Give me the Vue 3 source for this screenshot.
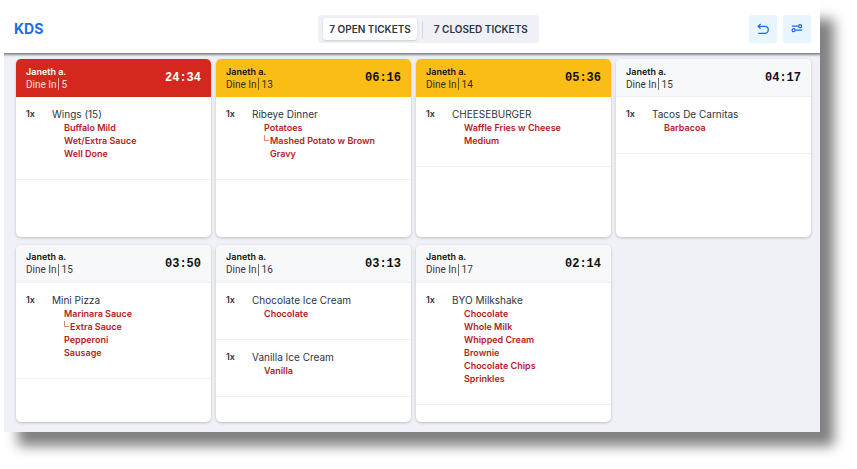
<script setup>
import { ref } from 'vue'

const tab = ref('open')
const tickets = [
  { name: 'Janeth a.', table: 5, time: '24:34', tone: 'late', items: [
    { name: 'Wings (15)', mods: [{ t: 'Buffalo Mild' }, { t: 'Wet/Extra Sauce' }, { t: 'Well Done' }] }] },
  { name: 'Janeth a.', table: 13, time: '06:16', tone: 'warn', items: [
    { name: 'Ribeye Dinner', mods: [{ t: 'Potatoes' }, { t: 'Mashed Potato w Brown Gravy', sub: true }] }] },
  { name: 'Janeth a.', table: 14, time: '05:36', tone: 'warn', items: [
    { name: 'CHEESEBURGER', mods: [{ t: 'Waffle Fries w Cheese' }, { t: 'Medium' }] }] },
  { name: 'Janeth a.', table: 15, time: '04:17', tone: 'calm', items: [
    { name: 'Tacos De Carnitas', mods: [{ t: 'Barbacoa' }] }] },
  { name: 'Janeth a.', table: 15, time: '03:50', tone: 'calm', items: [
    { name: 'Mini Pizza', mods: [{ t: 'Marinara Sauce' }, { t: 'Extra Sauce', sub: true }, { t: 'Pepperoni' }, { t: 'Sausage' }] }] },
  { name: 'Janeth a.', table: 16, time: '03:13', tone: 'calm', items: [
    { name: 'Chocolate Ice Cream', mods: [{ t: 'Chocolate' }] },
    { name: 'Vanilla Ice Cream', mods: [{ t: 'Vanilla' }] }] },
  { name: 'Janeth a.', table: 17, time: '02:14', tone: 'calm', items: [
    { name: 'BYO Milkshake', mods: [{ t: 'Chocolate' }, { t: 'Whole Milk' }, { t: 'Whipped Cream' }, { t: 'Brownie' }, { t: 'Chocolate Chips' }, { t: 'Sprinkles' }] }] },
]
</script>

<template>
  <div class="page">
    <div class="screen">
      <header class="bar">
        <h1 class="brand">KDS</h1>
        <nav class="tabs" aria-label="Tickets">
          <button type="button" class="tab" :class="{ on: tab === 'open' }" @click="tab = 'open'">7 OPEN TICKETS</button>
          <span class="sep"></span>
          <button type="button" class="tab" :class="{ on: tab === 'closed' }" @click="tab = 'closed'">7 CLOSED TICKETS</button>
        </nav>
        <div class="tools">
          <button type="button" class="tool" aria-label="Undo">
            <svg width="12" height="12" viewBox="0 0 12 12">
              <path d="M3.6 .9 1.2 3.3 3.6 5.7M1.4 3.3H7.8A3.5 3.5 0 0 1 7.8 10.3H1.2" />
            </svg>
          </button>
          <button type="button" class="tool" aria-label="Filters">
            <svg width="12" height="12" viewBox="0 0 12 12">
              <path d="M.8 3.2H7.4M4.6 7.2H11.2" /><circle cx="9.1" cy="3.2" r="1.5" /><circle cx="2.6" cy="7.2" r="1.5" />
            </svg>
          </button>
        </div>
      </header>
      <main class="board">
        <article v-for="(k, i) in tickets" :key="i" class="ticket">
          <div class="head" :class="k.tone">
            <div>
              <div class="who">{{ k.name }}</div>
              <div class="where">Dine In<span class="rule"></span>{{ k.table }}</div>
            </div>
            <time class="time">{{ k.time }}</time>
          </div>
          <div v-for="item in k.items" :key="item.name" class="item">
            <span class="qty">1x</span>
            <div class="detail">
              <div class="dish">{{ item.name }}</div>
              <ul class="mods">
                <li v-for="m in item.mods" :key="m.t" :class="{ sub: m.sub }"><i v-if="m.sub" class="elbow"></i><span>{{ m.t }}</span></li>
              </ul>
            </div>
          </div>
        </article>
      </main>
    </div>
  </div>
</template>

<style>
body { background: #fff; }
</style>

<style scoped>
* { box-sizing: border-box; }
.page {
  min-height: 100vh;
  padding: 5px 37px 37px 4px;
  display: flex;
  font-family: Inter, "Liberation Sans", sans-serif;
  color: #2b3545;
}
.screen {
  flex: 1;
  min-width: 0;
  display: flex;
  flex-direction: column;
  background: #eff1f6;
  box-shadow: 14px 14px 12px #808080;
}
.bar {
  position: relative;
  display: grid;
  grid-template-columns: 19fr auto 17fr;
  align-items: center;
  height: 48px;
  padding: 0 9px 0 10px;
  background: #fff;
  box-shadow: 0 1px 2px 1px #85878c;
  clip-path: inset(0 0 -5px 0);
}
.brand { margin: 0; font-size: 14px; line-height: 18px; font-weight: 700; color: #1b6be8; }
.tabs {
  display: flex;
  align-items: center;
  gap: 5px;
  height: 28px;
  padding: 0 5px;
  border-radius: 3px;
  background: #eff1f6;
}
.tab {
  height: 22px;
  padding: 0 6px;
  border: 0;
  border-radius: 3px;
  background: none;
  font: 600 10px/22px Inter, sans-serif;
  color: #2b3545;
}
.tab.on { background: #fff; box-shadow: 0 1px 2px #c9ccd3; }
.sep { width: 1px; height: 17px; background: #d2d5dc; }
.tools { display: flex; justify-content: flex-end; gap: 6px; }
.tool {
  display: grid;
  place-items: center;
  width: 28px;
  height: 28px;
  padding: 0;
  border: 0;
  border-radius: 3px;
  background: #e8f5ff;
}
.tool svg { fill: none; stroke: #1b6cf0; stroke-width: 1.3; }
.board {
  flex: 1;
  display: grid;
  grid-template-columns: repeat(4, 1fr);
  grid-auto-rows: 1fr;
  gap: 8px 5px;
  padding: 6px 9px 10px 12px;
}
.ticket { border-radius: 5px; background: #fff; box-shadow: 0 1px 3px #b9bcc3; overflow: hidden; }
.head {
  display: flex;
  align-items: center;
  justify-content: space-between;
  height: 38px;
  padding: 0 10px;
  color: #111;
}
.late { background: #d4281e; color: #fff; }
.warn { background: #fabd16; }
.calm { background: #f7f8fa; box-shadow: inset 0 -1px #eff0f3; }
.who { font-size: 9px; line-height: 12px; font-weight: 600; }
.where { display: flex; align-items: center; font: 400 10px/13px Roboto, sans-serif; opacity: .85; }
.rule { width: 1px; height: 12px; margin: 0 3px 0 1px; background: currentColor; opacity: .7; }
.time { font: 700 12px/16px "Liberation Mono", monospace; }
.item { display: flex; padding: 10px 10px 19px; border-bottom: 1px solid #f1f2f4; }
.qty { width: 26px; font-size: 9px; line-height: 14px; font-weight: 600; }
.detail { flex: 1; min-width: 0; }
.dish { font-size: 10px; line-height: 14px; }
.mods { margin: 0; padding: 0 20px 0 12px; list-style: none; font-size: 9px; line-height: 13px; font-weight: 600; color: #b5221c; }
.mods li { display: flex; }
.elbow { flex: none; width: 5px; height: 6px; margin: 1px 1px 0 0; border: solid #d98682; border-width: 0 0 1px 1px; }
</style>
